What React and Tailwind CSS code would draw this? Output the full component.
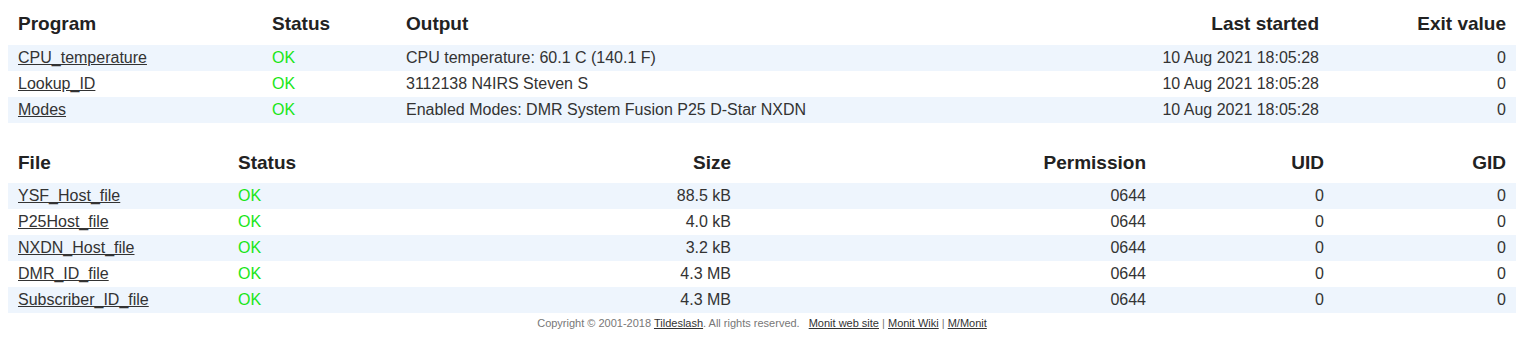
import React from 'react';

const programs = [
  { name: 'CPU_temperature', output: 'CPU temperature: 60.1 C (140.1 F)' },
  { name: 'Lookup_ID', output: '3112138 N4IRS Steven S' },
  { name: 'Modes', output: 'Enabled Modes: DMR System Fusion P25 D-Star NXDN' },
];

const files = [
  { name: 'YSF_Host_file', size: '88.5 kB' },
  { name: 'P25Host_file', size: '4.0 kB' },
  { name: 'NXDN_Host_file', size: '3.2 kB' },
  { name: 'DMR_ID_file', size: '4.3 MB' },
  { name: 'Subscriber_ID_file', size: '4.3 MB' },
];

const th = 'px-[10px] pt-[10px] pb-[6px] text-[19px] font-bold text-[#222]';
const td = 'px-[10px] h-[26px] py-0 text-[16px]';

const App = () => {
  return (
    <div className="bg-white px-[8px] font-['Liberation_Sans',Arial,sans-serif] text-[#333]">
      <table className="w-[1508px] table-fixed border-collapse">
        <colgroup>
          <col className="w-[254px]" />
          <col className="w-[134px]" />
          <col />
          <col className="w-[260px]" />
          <col className="w-[187px]" />
        </colgroup>
        <thead>
          <tr>
            <th className={`${th} text-left`}>Program</th>
            <th className={`${th} text-left`}>Status</th>
            <th className={`${th} text-left`}>Output</th>
            <th className={`${th} text-right`}>Last started</th>
            <th className={`${th} text-right`}>Exit value</th>
          </tr>
        </thead>
        <tbody>
          {programs.map((p, i) => (
            <tr key={p.name} className={i % 2 === 0 ? 'bg-[#eef5fd]' : 'bg-white'}>
              <td className={td}><a href="#" className="underline text-[#333]">{p.name}</a></td>
              <td className={`${td} text-[#19e619]`}>OK</td>
              <td className={td}>{p.output}</td>
              <td className={`${td} text-right`}>10 Aug 2021 18:05:28</td>
              <td className={`${td} text-right`}>0</td>
            </tr>
          ))}
        </tbody>
      </table>

      <table className="mt-[16px] w-[1508px] table-fixed border-collapse">
        <colgroup>
          <col className="w-[220px]" />
          <col className="w-[313px]" />
          <col className="w-[200px]" />
          <col className="w-[415px]" />
          <col className="w-[178px]" />
          <col />
        </colgroup>
        <thead>
          <tr>
            <th className={`${th} text-left`}>File</th>
            <th className={`${th} text-left`}>Status</th>
            <th className={`${th} text-right`}>Size</th>
            <th className={`${th} text-right`}>Permission</th>
            <th className={`${th} text-right`}>UID</th>
            <th className={`${th} text-right`}>GID</th>
          </tr>
        </thead>
        <tbody>
          {files.map((f, i) => (
            <tr key={f.name} className={i % 2 === 0 ? 'bg-[#eef5fd]' : 'bg-white'}>
              <td className={td}><a href="#" className="underline text-[#333]">{f.name}</a></td>
              <td className={`${td} text-[#19e619]`}>OK</td>
              <td className={`${td} text-right`}>{f.size}</td>
              <td className={`${td} text-right`}>0644</td>
              <td className={`${td} text-right`}>0</td>
              <td className={`${td} text-right`}>0</td>
            </tr>
          ))}
        </tbody>
      </table>

      <p className="w-[1508px] pt-[2px] text-center text-[11px] text-[#777]">
        Copyright © 2001-2018 <a href="#" className="underline text-[#333]">Tildeslash</a>. All rights reserved.
        <span className="ml-[9px]">
          <a href="#" className="underline text-[#333]">Monit web site</a> |{' '}
          <a href="#" className="underline text-[#333]">Monit Wiki</a> |{' '}
          <a href="#" className="underline text-[#333]">M/Monit</a>
        </span>
      </p>
    </div>
  );
};

export default App;
